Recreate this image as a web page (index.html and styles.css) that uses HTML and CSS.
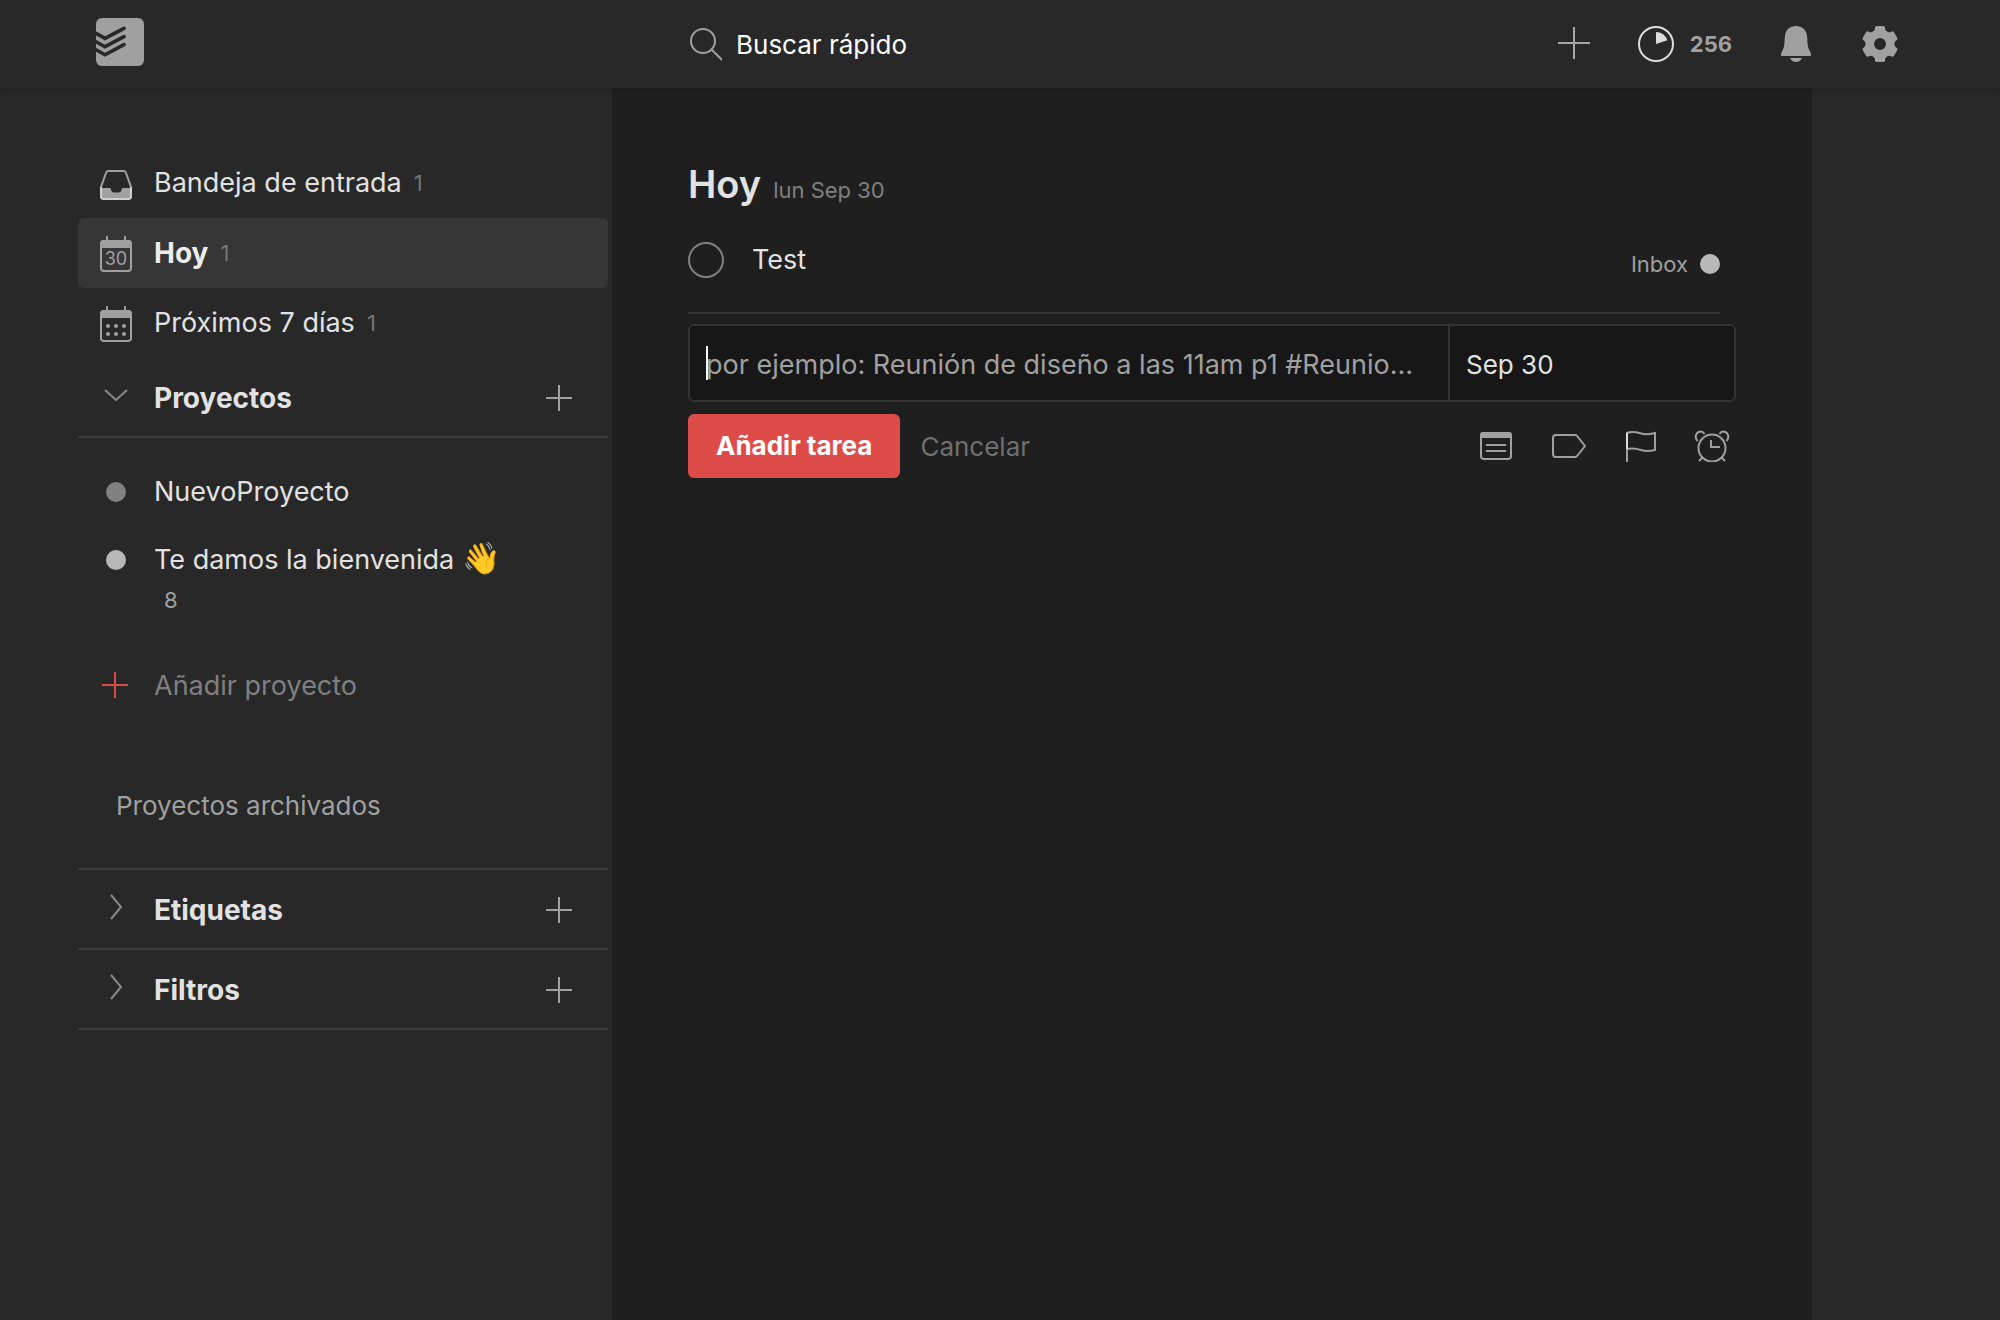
FILE: index.html
```html
<!DOCTYPE html>
<html lang="es">
<head>
<meta charset="utf-8">
<title>Hoy</title>
<meta name="viewport" content="width=device-width, initial-scale=1">
<link rel="stylesheet" href="styles.css">
</head>
<body>
<header class="topbar">
  <a class="logo" href="#" aria-label="Inicio">
    <svg width="48" height="48" viewBox="0 0 48 48" fill="none">
      <rect width="48" height="48" rx="6" fill="#a0a0a0"/>
      <g stroke="#282828" stroke-width="3.600" stroke-linecap="round">
        <path d="M-2 14.300L9 20.400L28 10.300"/>
        <path d="M-2 22.600L9 28.700L28 18.600"/>
        <path d="M-2 30.700L9 36.800L28 26.700"/>
      </g>
    </svg>
  </a>
  <label class="search">
    <svg width="34" height="34" viewBox="0 0 34 34" fill="none" stroke="#a0a0a0" stroke-width="2">
      <circle cx="15" cy="14" r="12"/><path d="M23.500 22.500L34 33"/>
    </svg>
    <input class="search-input" type="text" placeholder="Buscar rápido" aria-label="Buscar rápido">
  </label>
  <div class="tools">
    <button class="tool" type="button" aria-label="Añadir tarea rápida">
      <svg width="32" height="34" viewBox="0 0 32 34" stroke="#a8a8a8" stroke-width="2"><path d="M16 0V32M0 16H32"/></svg>
    </button>
    <button class="tool tool-score" type="button">
      <svg width="36" height="36" viewBox="0 0 36 36" fill="none">
        <circle cx="18" cy="18" r="17" stroke="#dcdcdc" stroke-width="2"/>
        <path d="M18 18V6A12 12 0 0 1 29.400 14.300Z" fill="#dcdcdc"/>
      </svg>
      <span>256</span>
    </button>
    <button class="tool" type="button" aria-label="Notificaciones">
      <svg width="34" height="36" viewBox="0 0 34 36" fill="#a0a0a0">
        <path d="M16 0C22 0 26 3.500 27 9.500C27.700 15 27 20 29.500 24.500C30.500 26.500 31.500 28 31 29.500Q30.600 30 29.500 30H2.500Q1.400 30 1 29.500C.5 28 1.500 26.500 2.500 24.500C5 20 4.300 15 5 9.500C6 3.500 10 0 16 0Z"/>
        <path d="M10 32H22C21 34.500 18.500 36 16 36S11 34.500 10 32Z"/>
      </svg>
    </button>
    <button class="tool" type="button" aria-label="Ajustes">
      <svg width="36" height="36" viewBox="0 0 36 36" fill="none">
        <circle cx="18" cy="18" r="10.250" stroke="#a0a0a0" stroke-width="8.500"/>
        <g fill="#a0a0a0">
          <path id="tooth" d="M11.500 5.500Q13 4 13 1.500Q13.200 0 14.500 0H21.500Q22.800 0 23 1.500Q23 4 24.500 5.500Z"/>
          <use href="#tooth" transform="rotate(60 18 18)"/>
          <use href="#tooth" transform="rotate(120 18 18)"/>
          <use href="#tooth" transform="rotate(180 18 18)"/>
          <use href="#tooth" transform="rotate(240 18 18)"/>
          <use href="#tooth" transform="rotate(300 18 18)"/>
        </g>
      </svg>
    </button>
  </div>
</header>

<div class="layout">
  <nav class="sidebar" aria-label="Principal">
    <a class="nav-row" href="#">
      <svg class="nav-icon" width="32" height="36" viewBox="0 0 32 36" fill="none">
        <path d="M1 23V22L6 8Q6.500 6 8.500 6H23.500Q25.500 6 26 8L31 22V23" stroke="#a0a0a0" stroke-width="2"/>
        <path d="M0 23H10.500C11 26 12.500 27.500 14 27.500H18.500C20.500 27.500 21.500 26 22 23H32V31Q32 35 28 35H4Q0 35 0 31Z" fill="#a0a0a0"/>
        <path d="M1 22V31Q1 34 4 34H28Q31 34 31 31V22" stroke="#d0d0d0" stroke-width="2"/>
      </svg>
      <span class="nav-text">Bandeja de entrada</span><span class="count">1</span>
    </a>
    <a class="nav-row nav-row-active" href="#" aria-current="page">
      <svg class="nav-icon" width="32" height="38" viewBox="0 -2 32 38" fill="none">
        <rect x="1" y="5" width="30" height="30" rx="3" stroke="#a0a0a0" stroke-width="2"/>
        <path d="M0 12V8Q0 4 4 4H28Q32 4 32 8V12Z" fill="#a0a0a0"/>
        <path d="M7 0V5M25 0V5" stroke="#a0a0a0" stroke-width="2"/>
        <text class="icon-day" x="16" y="29" text-anchor="middle">30</text>
      </svg>
      <span class="nav-text">Hoy</span><span class="count">1</span>
    </a>
    <a class="nav-row" href="#">
      <svg class="nav-icon" width="32" height="38" viewBox="0 -2 32 38" fill="none">
        <rect x="1" y="5" width="30" height="30" rx="3" stroke="#a0a0a0" stroke-width="2"/>
        <path d="M0 12V8Q0 4 4 4H28Q32 4 32 8V12Z" fill="#a0a0a0"/>
        <path d="M7 0V5M25 0V5" stroke="#a0a0a0" stroke-width="2"/>
        <g fill="#a0a0a0"><circle cx="8" cy="20" r="2"/><circle cx="16" cy="20" r="2"/><circle cx="24" cy="20" r="2"/><circle cx="8" cy="28" r="2"/><circle cx="16" cy="28" r="2"/><circle cx="24" cy="28" r="2"/></g>
      </svg>
      <span class="nav-text">Próximos 7 días</span><span class="count">1</span>
    </a>

    <div class="section">
      <button class="section-toggle" type="button" aria-expanded="true">
        <svg class="nav-icon" width="32" height="32" viewBox="0 0 32 32" fill="none" stroke="#8a8a8a" stroke-width="2"><path d="M5 8L16 18L27 8"/></svg>
        <span>Proyectos</span>
      </button>
      <button class="section-add" type="button" aria-label="Añadir a Proyectos"><svg width="26" height="26" viewBox="0 0 26 26" stroke="#a0a0a0" stroke-width="2"><path d="M13 0V26M0 13H26"/></svg></button>
    </div>
    <div class="projects">
      <a class="project" href="#"><span class="dot-cell"><i class="dot dot-dim"></i></span><span>NuevoProyecto</span></a>
      <a class="project" href="#"><span class="dot-cell"><i class="dot"></i></span><span>Te damos la bienvenida <span class="wave">👋</span><span class="project-count">8</span></span></a>
    </div>
    <button class="add-project" type="button">
      <svg class="nav-icon" width="32" height="28" viewBox="0 0 32 28" stroke="#de4c4a" stroke-width="2"><path d="M15 0V26M2 13H28"/></svg>
      <span>Añadir proyecto</span>
    </button>
    <a class="archived" href="#">Proyectos archivados</a>
    <div class="section section-first">
      <button class="section-toggle" type="button" aria-expanded="false">
        <svg class="nav-icon" width="32" height="32" viewBox="0 0 32 32" fill="none" stroke="#8a8a8a" stroke-width="2"><path d="M11 1L21 13L11 25"/></svg>
        <span>Etiquetas</span>
      </button>
      <button class="section-add" type="button" aria-label="Añadir a Etiquetas"><svg width="26" height="26" viewBox="0 0 26 26" stroke="#a0a0a0" stroke-width="2"><path d="M13 0V26M0 13H26"/></svg></button>
    </div>
    <div class="section">
      <button class="section-toggle" type="button" aria-expanded="false">
        <svg class="nav-icon" width="32" height="32" viewBox="0 0 32 32" fill="none" stroke="#8a8a8a" stroke-width="2"><path d="M11 1L21 13L11 25"/></svg>
        <span>Filtros</span>
      </button>
      <button class="section-add" type="button" aria-label="Añadir a Filtros"><svg width="26" height="26" viewBox="0 0 26 26" stroke="#a0a0a0" stroke-width="2"><path d="M13 0V26M0 13H26"/></svg></button>
    </div>
  </nav>

  <main class="content">
    <div class="heading"><h1>Hoy</h1><span class="date">lun Sep 30</span></div>
    <div class="task">
      <input class="task-check" id="task-test" type="checkbox">
      <label class="task-name" for="task-test">Test</label>
      <a class="task-project" href="#">Inbox <i class="dot"></i></a>
    </div>
    <form class="editor">
      <div class="fields">
        <div class="field-main">
          <input class="field field-name" type="text" aria-label="Nombre de la tarea" placeholder="por ejemplo: Reunión de diseño a las 11am p1 #Reuniones">
          <span class="caret"></span>
        </div>
        <input class="field field-date" type="text" aria-label="Fecha" value="Sep 30">
      </div>
      <div class="actions">
        <button class="submit" type="button">Añadir tarea</button>
        <button class="cancel" type="button">Cancelar</button>
        <div class="extras">
          <button type="button" aria-label="Proyecto"><svg width="36" height="32" viewBox="0 0 36 32" fill="none" stroke="#a0a0a0" stroke-width="2">
            <rect x="3" y="3" width="30" height="26" rx="3"/><path d="M2 8V5Q2 2 5 2H31Q34 2 34 5V8Z" fill="#a0a0a0" stroke="none"/><path d="M8 15H28M8 21H28"/></svg></button>
          <button type="button" aria-label="Etiqueta"><svg width="36" height="32" viewBox="0 0 36 32" fill="none" stroke="#a0a0a0" stroke-width="2" stroke-linejoin="round">
            <path d="M6 5H25Q26.500 5 27.500 6.500L35 16L27.500 25.500Q26.500 27 25 27H6Q3 27 3 24V8Q3 5 6 5Z"/></svg></button>
          <button type="button" aria-label="Prioridad"><svg width="36" height="32" viewBox="0 0 36 32" fill="none" stroke="#a0a0a0" stroke-width="2">
            <path d="M5 3C10 1 14 2 19 3.500S29 4 33 3V20C29 21 25 22 19 20S10 18 5 19"/><path d="M5 2V32"/><path d="M5 3V19" stroke="#dcdcdc"/></svg></button>
          <button type="button" aria-label="Recordatorio"><svg width="36" height="32" viewBox="0 0 36 32" fill="none" stroke="#a0a0a0" stroke-width="2">
            <circle cx="18" cy="18" r="13.500"/><path d="M17 10V17H26"/><path d="M9 27L5 31M27 27L31 31"/><path d="M3.500 11C0 7 2 1.500 7 1.500Q9 1.500 10.500 4M32.500 11C36 7 34 1.500 29 1.500Q27 1.500 25.500 4"/></svg></button>
        </div>
      </div>
    </form>
  </main>
</div>
</body>
</html>
```
FILE: styles.css
```css
* { box-sizing: border-box; }

body {
  margin: 0;
  min-height: 100vh;
  display: flex;
  flex-direction: column;
  background: #282828;
  color: #e2e2e2;
  font-family: Inter, "Liberation Sans", sans-serif;
  font-size: 27px;
  line-height: 36px;
}

a { color: inherit; text-decoration: none; }

button {
  padding: 0;
  border: 0;
  background: none;
  color: inherit;
  font: inherit;
  text-align: left;
}

input { font: inherit; color: inherit; }

svg { display: block; flex: none; }

/* Top bar */
.topbar {
  position: relative;
  z-index: 1;
  display: grid;
  grid-template-columns: 592px 1fr auto;
  align-items: center;
  height: 88px;
  padding: 0 102px 0 96px;
  background: #282828;
  box-shadow: 0 2px 4px rgba(0, 0, 0, 0.15);
}

.logo { padding-bottom: 4px; }
.search { display: flex; align-items: center; gap: 14px; }

.search-input {
  width: 400px;
  height: 40px;
  padding: 0;
  border: 0;
  background: none;
  font-size: 26px;
}
.search-input::placeholder { color: #fff; opacity: 1; }

.tools { display: flex; align-items: center; gap: 48px; }
.tool-score {
  display: flex;
  align-items: center;
  gap: 16px;
  color: #a0a0a0;
  font-size: 22px;
  font-weight: 700;
}

/* Layout */
.layout {
  flex: 1;
  display: grid;
  grid-template-columns: 612px 1fr 188px;
}

/* Sidebar */
.sidebar { padding: 60px 4px 0 78px; }

.nav-row {
  display: flex;
  align-items: center;
  height: 70px;
  padding: 0 22px;
  border-radius: 6px;
}
.nav-row-active { background: #363636; }
.nav-row-active .nav-text { font-size: 28px; font-weight: 700; color: #ececec; }
.nav-icon { margin-right: 22px; }
.icon-day { fill: #a0a0a0; font-size: 18px; }

.count { margin-left: 12px; color: #777; font-size: 22px; }

.section {
  display: flex;
  align-items: center;
  justify-content: space-between;
  height: 80px;
  padding: 2px 36px 0 22px;
  border-bottom: 2px solid #3c3c3c;
}
.section-first { height: 82px; border-top: 2px solid #3c3c3c; }
.section-toggle {
  display: flex;
  align-items: center;
  font-size: 28px;
  font-weight: 700;
}

.projects {
  display: flex;
  flex-direction: column;
  gap: 32px;
  padding: 36px 22px 0;
}
.project { display: flex; align-items: flex-start; }
.dot-cell {
  display: flex;
  align-items: center;
  justify-content: center;
  width: 32px;
  height: 36px;
  margin-right: 22px;
}
.dot {
  flex: none;
  width: 20px;
  height: 20px;
  border-radius: 50%;
  background: #b8b8b8;
}
.dot-dim { background: #808080; }
.wave {
  font-family: "Noto Color Emoji", "Apple Color Emoji", sans-serif;
  font-size: 31px;
  line-height: 1;
}
.project-count {
  display: block;
  padding: 4px 10px 0;
  color: #a0a0a0;
  font-size: 22px;
}

.add-project {
  display: flex;
  align-items: center;
  margin: 50px 22px 0;
  color: #808080;
}
.archived {
  display: block;
  padding: 84px 38px 44px;
  color: #a0a0a0;
  font-size: 26px;
}

/* Content */
.content {
  padding: 74px 76px 40px;
  background: #1f1f1f;
}

.heading { display: flex; align-items: baseline; gap: 12px; }
.heading h1 { margin: 0; font-size: 38px; line-height: 44px; font-weight: 600; }
.date { color: #808080; font-size: 22px; }

.task {
  display: flex;
  align-items: flex-start;
  height: 86px;
  margin: 20px 16px 0 0;
  padding-top: 14px;
  border-bottom: 2px solid #333;
}
.task-check {
  appearance: none;
  flex: none;
  width: 36px;
  height: 36px;
  margin: 0 28px 0 0;
  border: 2px solid #808080;
  border-radius: 50%;
}
.task-name { flex: 1; }
.task-project {
  display: flex;
  align-items: center;
  gap: 12px;
  padding-top: 4px;
  color: #a0a0a0;
  font-size: 22px;
}

.editor { margin-top: 10px; }
.fields {
  display: grid;
  grid-template-columns: 1fr 286px;
  height: 78px;
  border: 2px solid #333;
  border-radius: 6px;
  background: #171717;
}
.field-main { position: relative; display: grid; }
.field {
  min-width: 0;
  padding: 4px 16px 0;
  border: 0;
  background: none;
  text-overflow: ellipsis;
}
.field-name { padding-right: 28px; }
.field::placeholder { color: #a0a0a0; opacity: 1; text-overflow: ellipsis; }
.field-date {
  border-left: 2px solid #333;
  font-size: 26px;
}
.caret {
  position: absolute;
  top: 20px;
  left: 16px;
  width: 2px;
  height: 34px;
  background: #fff;
}

.actions {
  display: flex;
  align-items: center;
  gap: 20px;
  margin-top: 12px;
  font-size: 26px;
}
.submit {
  height: 64px;
  padding: 0 28px;
  border-radius: 6px;
  background: #de4c4a;
  color: #fff;
  font-weight: 700;
}
.cancel { padding-top: 2px; color: #707070; }
.extras {
  display: flex;
  gap: 36px;
  margin-left: auto;
  padding-right: 6px;
}
```
